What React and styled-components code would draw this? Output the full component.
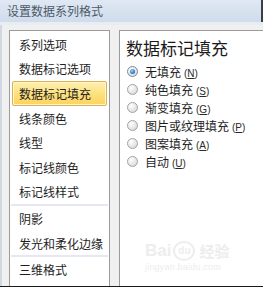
import React from "react";
import styled, { createGlobalStyle } from "styled-components";

const GlobalStyle = createGlobalStyle`
  html, body {
    margin: 0;
    padding: 0;
    background: #f0f0f0;
  }
  body {
    font-family: "Noto Sans CJK SC", "Liberation Sans", sans-serif;
  }
`;

const Window = styled.div`
  width: 263px;
  height: 287px;
  box-sizing: border-box;
  display: flex;
  flex-direction: column;
  overflow: hidden;
  border-bottom: 1px solid #1b1b1b;
  background: #f0f0f0;
`;

const TitleBar = styled.div`
  height: 22px;
  flex: none;
  box-sizing: border-box;
  display: flex;
  align-items: center;
  padding-left: 7px;
  background: linear-gradient(#dfe8f3, #cfdcec);
  border-right: 2px solid #3a3f46;
  color: #4d5968;
  font-size: 12px;
  line-height: 14px;
`;

const Strip = styled.div`
  height: 3px;
  flex: none;
  background: #e8edf4;
`;

const Body = styled.div`
  flex: 1;
  display: flex;
  gap: 9px;
  padding: 5px 0 0 7px;
  border-left: 2px solid #cfd8e3;
  min-height: 0;
`;

const Panel = styled.div`
  background: #fff;
  border: 1px solid #9b9b9b;
  border-bottom: none;
  box-sizing: border-box;
  position: relative;
`;

const NavPanel = styled(Panel)`
  width: 101px;
  flex: none;
  padding: 1px 1px 0;
`;

const ContentPanel = styled(Panel)`
  flex: 1;
  margin-right: -2px;
  padding: 5px 0 0 6px;
`;

const NavItem = styled.div`
  height: 24.6px;
  box-sizing: border-box;
  display: flex;
  align-items: center;
  margin: 0 1px;
  padding-left: 6px;
  font-size: 12px;
  color: #1e1e1e;
  white-space: nowrap;
  border: 1px solid ${(p) => (p.$active ? "#e0b04e" : "transparent")};
  border-radius: 2px;
  background: ${(p) =>
    p.$active ? "linear-gradient(#fef0b0, #fde07c 55%, #fbd35e)" : "transparent"};
  box-shadow: ${(p) => (p.$active ? "inset 0 0 0 1px #fff6d4" : "none")};
`;

const Separator = styled.div`
  height: 2px;
  background: #e5e8f0;
`;

const Heading = styled.div`
  font-size: 17px;
  line-height: 24px;
  color: #1a1a1a;
  margin-bottom: 2px;
  white-space: nowrap;
`;

const OptionRow = styled.div`
  height: 18px;
  display: flex;
  align-items: center;
  gap: 7px;
  padding-left: 1px;
  font-size: 12px;
  color: #1e1e1e;
  white-space: nowrap;
`;

const Radio = styled.span`
  width: 11px;
  height: 11px;
  box-sizing: border-box;
  border-radius: 50%;
  border: 1px solid ${(p) => (p.$checked ? "#7d8895" : "#a2a2a2")};
  background: radial-gradient(circle at 35% 30%, #ffffff, #e4e4e4 60%, #cfcfcf);
  display: flex;
  align-items: center;
  justify-content: center;
  flex: none;

  &::after {
    content: "";
    display: ${(p) => (p.$checked ? "block" : "none")};
    width: 5px;
    height: 5px;
    border-radius: 50%;
    background: radial-gradient(circle at 40% 35%, #9ad6fb, #2a7bc8 60%, #164f8f);
  }
`;

const Key = styled.span`
  font-family: "Liberation Sans", sans-serif;
  font-size: 10px;
  margin-left: 3px;
  color: #2a2a2a;

  u {
    text-decoration: underline;
  }
`;

const Watermark = styled.div`
  position: absolute;
  left: 25px;
  top: 209px;
  color: #ededed;
  font-family: "Liberation Sans", sans-serif;
  pointer-events: none;
`;

const MarkTop = styled.div`
  display: flex;
  align-items: center;
  gap: 2px;
  font-size: 17px;
  font-weight: bold;
  line-height: 22px;
`;

const Paw = styled.span`
  display: inline-flex;
  align-items: center;
  justify-content: center;
  width: 22px;
  height: 20px;
  border-radius: 50%;
  border: 2px solid #ededed;
  box-sizing: border-box;
  font-size: 10px;
`;

const MarkCn = styled.span`
  font-family: "Noto Sans CJK SC", sans-serif;
  font-size: 15px;
  font-weight: bold;
  margin-left: 2px;
`;

const MarkUrl = styled.div`
  font-size: 9px;
  line-height: 10px;
  letter-spacing: 0.2px;
`;

const navGroups = [
  ["系列选项", "数据标记选项", "数据标记填充", "线条颜色", "线型", "标记线颜色", "标记线样式"],
  ["阴影", "发光和柔化边缘"],
  ["三维格式"],
];

const options = [
  ["无填充", "N"],
  ["纯色填充", "S"],
  ["渐变填充", "G"],
  ["图片或纹理填充", "P"],
  ["图案填充", "A"],
  ["自动", "U"],
];

export default function App() {
  return (
    <>
      <GlobalStyle />
      <Window>
        <TitleBar>设置数据系列格式</TitleBar>
        <Strip />
        <Body>
          <NavPanel>
            {navGroups.map((group, gi) => (
              <React.Fragment key={gi}>
                {gi > 0 && <Separator />}
                {group.map((label) => (
                  <NavItem key={label} $active={label === "数据标记填充"}>
                    {label}
                  </NavItem>
                ))}
              </React.Fragment>
            ))}
          </NavPanel>
          <ContentPanel>
            <Heading>数据标记填充</Heading>
            {options.map(([label, key], i) => (
              <OptionRow key={key}>
                <Radio $checked={i === 0} />
                <span>
                  {label}
                  <Key>
                    (<u>{key}</u>)
                  </Key>
                </span>
              </OptionRow>
            ))}
            <Watermark>
              <MarkTop>
                Bai<Paw>du</Paw>
                <MarkCn>经验</MarkCn>
              </MarkTop>
              <MarkUrl>jingyan.baidu.com</MarkUrl>
            </Watermark>
          </ContentPanel>
        </Body>
      </Window>
    </>
  );
}
